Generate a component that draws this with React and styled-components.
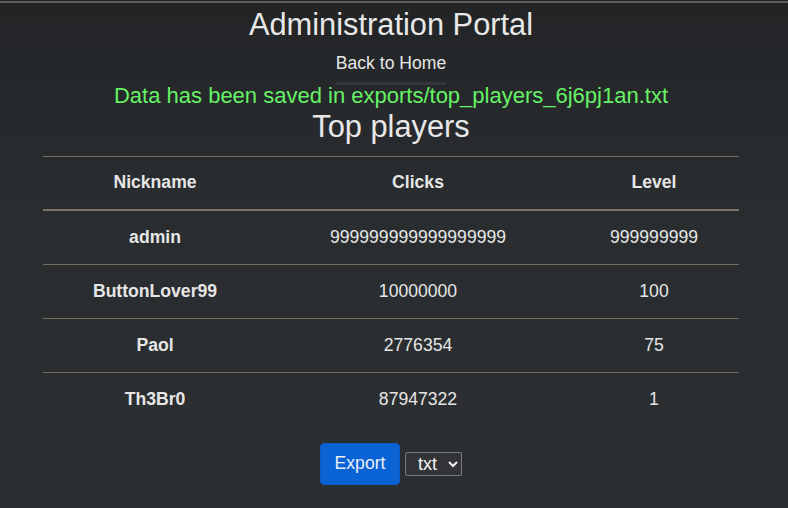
import React from 'react';
import styled, { createGlobalStyle } from 'styled-components';

const GlobalStyle = createGlobalStyle`
  html, body {
    margin: 0;
    padding: 0;
    height: 100%;
  }
  body {
    background: linear-gradient(180deg, #222426 0%, #2a2d30 40%, #2c2f32 100%);
    font-family: "Liberation Sans", Arial, sans-serif;
    color: #e6e6e6;
  }
`;

// --- Layout ---
const Page = styled.div`
  min-height: 505px;
  border-top: 2px solid #5d5f61;
  margin-top: 1px;
  padding-right: 6px;
  display: flex;
  flex-direction: column;
  align-items: center;
`;

const Title = styled.h1`
  font-size: 30.8px;
  font-weight: 400;
  margin: 4px 0 0;
  line-height: 36px;
  color: #e8e8e8;
`;

const HomeLink = styled.a`
  display: inline-block;
  margin-top: 8px;
  font-size: 17.6px;
  line-height: 24px;
  color: #e6e6e6;
  text-decoration: none;
  padding-bottom: 7px;
  border-bottom: 3px solid #33363a;
`;

const Notice = styled.div`
  font-size: 22px;
  line-height: 26px;
  color: #66f266;
  margin-top: -2px;
`;

const SubTitle = styled.h2`
  font-size: 30.8px;
  font-weight: 400;
  line-height: 36px;
  margin: 0 0 11px;
  color: #e8e8e8;
`;

// --- Table ---
const Table = styled.table`
  width: 696px;
  table-layout: fixed;
  border-collapse: collapse;
  text-align: center;
  font-size: 17.6px;
`;

const HeadCell = styled.th`
  box-sizing: border-box;
  width: ${(p) => p.$w}px;
  font-weight: 700;
  height: 53px;
  padding: 0 8px;
  border-top: 1px solid #776e62;
  border-bottom: 2px solid #7d7466;
  color: #e6e6e6;
`;

const Row = styled.tr`
  border-bottom: ${(p) => (p.$last ? 'none' : '1px solid #776e62')};
`;

const Cell = styled.td`
  height: 53px;
  padding: 0 8px;
  font-weight: ${(p) => (p.$bold ? 700 : 400)};
  color: #e6e6e6;
`;

// --- Export controls ---
const Controls = styled.div`
  display: flex;
  align-items: center;
  gap: 5px;
  margin-top: 17px;
`;

const ExportButton = styled.button`
  width: 80px;
  height: 42px;
  background: #0a63d4;
  color: #e8eef8;
  border: 1px solid #0b5bc2;
  border-radius: 4px;
  font-family: "Liberation Sans", Arial, sans-serif;
  font-size: 17.6px;
  cursor: pointer;
`;

const FormatSelect = styled.select`
  width: 57px;
  height: 24px;
  background: #333437;
  color: #f4f4f4;
  border: 1px solid #7a7a7a;
  border-radius: 2px;
  font-family: "Liberation Sans", Arial, sans-serif;
  font-size: 18px;
  padding: 0 0 0 8px;
`;

const players = [
  { nick: 'admin', clicks: '999999999999999999', level: '999999999' },
  { nick: 'ButtonLover99', clicks: '10000000', level: '100' },
  { nick: 'Paol', clicks: '2776354', level: '75' },
  { nick: 'Th3Br0', clicks: '87947322', level: '1' },
];

const App = () => {
  return (
    <>
      <GlobalStyle />
      <Page>
        <Title>Administration Portal</Title>
        <HomeLink href="#">Back to Home</HomeLink>
        <Notice>Data has been saved in exports/top_players_6j6pj1an.txt</Notice>
        <SubTitle>Top players</SubTitle>
        <Table>
          <thead>
            <tr>
              <HeadCell $w={224}>Nickname</HeadCell>
              <HeadCell $w={302}>Clicks</HeadCell>
              <HeadCell $w={170}>Level</HeadCell>
            </tr>
          </thead>
          <tbody>
            {players.map((p, i) => (
              <Row key={p.nick} $last={i === players.length - 1}>
                <Cell $bold>{p.nick}</Cell>
                <Cell>{p.clicks}</Cell>
                <Cell>{p.level}</Cell>
              </Row>
            ))}
          </tbody>
        </Table>
        <Controls>
          <ExportButton>Export</ExportButton>
          <FormatSelect defaultValue="txt">
            <option value="txt">txt</option>
            <option value="csv">csv</option>
            <option value="json">json</option>
          </FormatSelect>
        </Controls>
      </Page>
    </>
  );
};

export default App;
